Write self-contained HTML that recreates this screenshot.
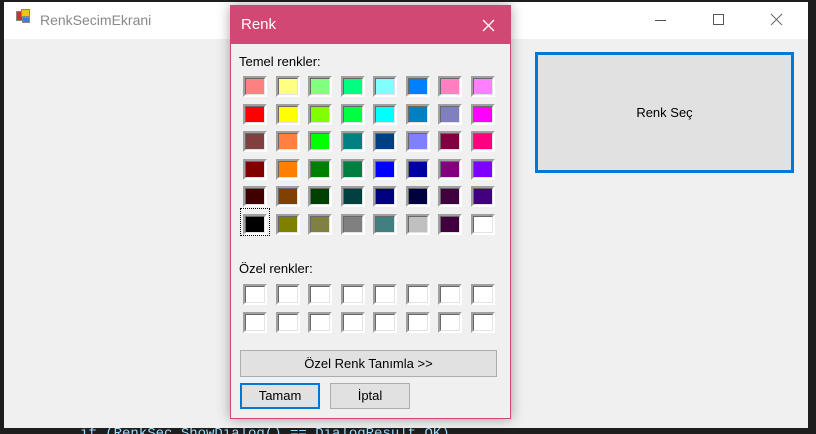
<!DOCTYPE html>
<html><head><meta charset="utf-8"><style>
*{margin:0;padding:0;box-sizing:border-box}
html,body{width:816px;height:434px;overflow:hidden}
body{background:#1e1e1e;position:relative;font-family:"Liberation Sans",sans-serif;font-size:12px;color:#000}
.main{position:absolute;left:4px;top:2px;width:804px;height:426px;background:#f0f0f0}
.tb{position:absolute;left:0;top:0;width:804px;height:37px;background:#fff}
.tb .t{position:absolute;left:36px;top:10px;font-size:14px;color:#888}
.abs{position:absolute}
.dlg{position:absolute;left:230px;top:5px;width:281px;height:414px;background:#f0f0f0;border:1px solid #d04873;box-shadow:0 0 12px rgba(0,0,0,.35)}
.dt{position:absolute;left:0;top:0;width:279px;height:38px;background:#d04873;color:#fff;font-size:15px}
.sw{position:absolute;width:24px;height:21px;border:2px solid;border-color:#a0a0a0 #fff #fff #a0a0a0}
.sw i{display:block;width:100%;height:100%;border:1px solid;border-color:#696969 #e3e3e3 #e3e3e3 #696969}
.btn{position:absolute;background:#e1e1e1;border:1px solid #adadad;text-align:center;font-size:13px}
.code{position:absolute;left:80px;top:427px;height:7px;overflow:hidden;line-height:14px;color:#9cdcfe;font-family:"Liberation Mono",monospace;font-size:14px;white-space:nowrap}
</style></head><body>
<div class="code">if (RenkSec.ShowDialog() == DialogResult.OK)</div>
<div class="main">
 <div class="tb">
  <div class="abs" style="left:12px;top:9px;width:8px;height:10px;background:#c0392b;border:1px solid #888"></div>
  <div class="abs" style="left:17px;top:7px;width:9px;height:8px;background:#f1c40f;border:1px solid #888"></div>
  <div class="abs" style="left:18px;top:15px;width:8px;height:6px;background:#3b7dd8;border:1px solid #888"></div>
  <div class="t">RenkSecimEkrani</div>
  <div class="abs" style="left:651px;top:18px;width:11px;height:1px;background:#555"></div>
  <div class="abs" style="left:709px;top:12px;width:11px;height:11px;border:1px solid #555"></div>
  <svg class="abs" style="left:766px;top:11px" width="13" height="13"><path d="M1 1L12 12M12 1L1 12" stroke="#666" stroke-width="1"/></svg>
 </div>
 <div class="btn" style="left:531px;top:50px;width:259px;height:121px;border:3px solid #0078d7;background:#e1e1e1;line-height:115px;font-size:13px">Renk Seç</div>
</div>
<div class="dlg">
 <div class="dt"><span class="abs" style="left:10px;top:10px">Renk</span>
 <svg class="abs" style="left:251px;top:13px" width="13" height="13"><path d="M1 1L12 12M12 1L1 12" stroke="#fff" stroke-width="1.3"/></svg></div>
 <div class="abs" style="left:8px;top:48px;font-size:13px">Temel renkler:</div>
 <div id="g"></div>
 <div class="abs" style="left:8px;top:255px;font-size:13px">Özel renkler:</div>
 <div class="btn" style="left:9px;top:344px;width:257px;height:27px;line-height:25px">Özel Renk Tanımla &gt;&gt;</div>
 <div class="btn" style="left:9px;top:377px;width:80px;height:26px;line-height:22px;border:2px solid #0078d7">Tamam</div>
 <div class="btn" style="left:99px;top:377px;width:80px;height:26px;line-height:24px">İptal</div>
</div>
<script>
var c=["#ff8080","#ffff80","#80ff80","#00ff80","#80ffff","#0080ff","#ff80c0","#ff80ff",
"#ff0000","#ffff00","#80ff00","#00ff40","#00ffff","#0080c0","#8080c0","#ff00ff",
"#804040","#ff8040","#00ff00","#008080","#004080","#8080ff","#800040","#ff0080",
"#800000","#ff8000","#008000","#008040","#0000ff","#0000a0","#800080","#8000ff",
"#400000","#804000","#004000","#004040","#000080","#000040","#400040","#400080",
"#000000","#808000","#808040","#808080","#408080","#c0c0c0","#400040","#ffffff"];
var h="",xs=[12,45,77,110,142,175,207,240];
for(var r=0;r<6;r++)for(var k=0;k<8;k++){h+='<div class="sw" style="left:'+xs[k]+'px;top:'+(70+r*27.5)+'px"><i style="background:'+c[r*8+k]+'"></i></div>';}
for(var r=0;r<2;r++)for(var k=0;k<8;k++){h+='<div class="sw" style="left:'+xs[k]+'px;top:'+(278+r*28)+'px"><i style="background:#fff"></i></div>';}
h+='<div class="abs" style="left:9px;top:202px;width:30px;height:28px;border:1px dotted #000"></div>';
document.getElementById("g").innerHTML=h;
</script>
</body></html>
